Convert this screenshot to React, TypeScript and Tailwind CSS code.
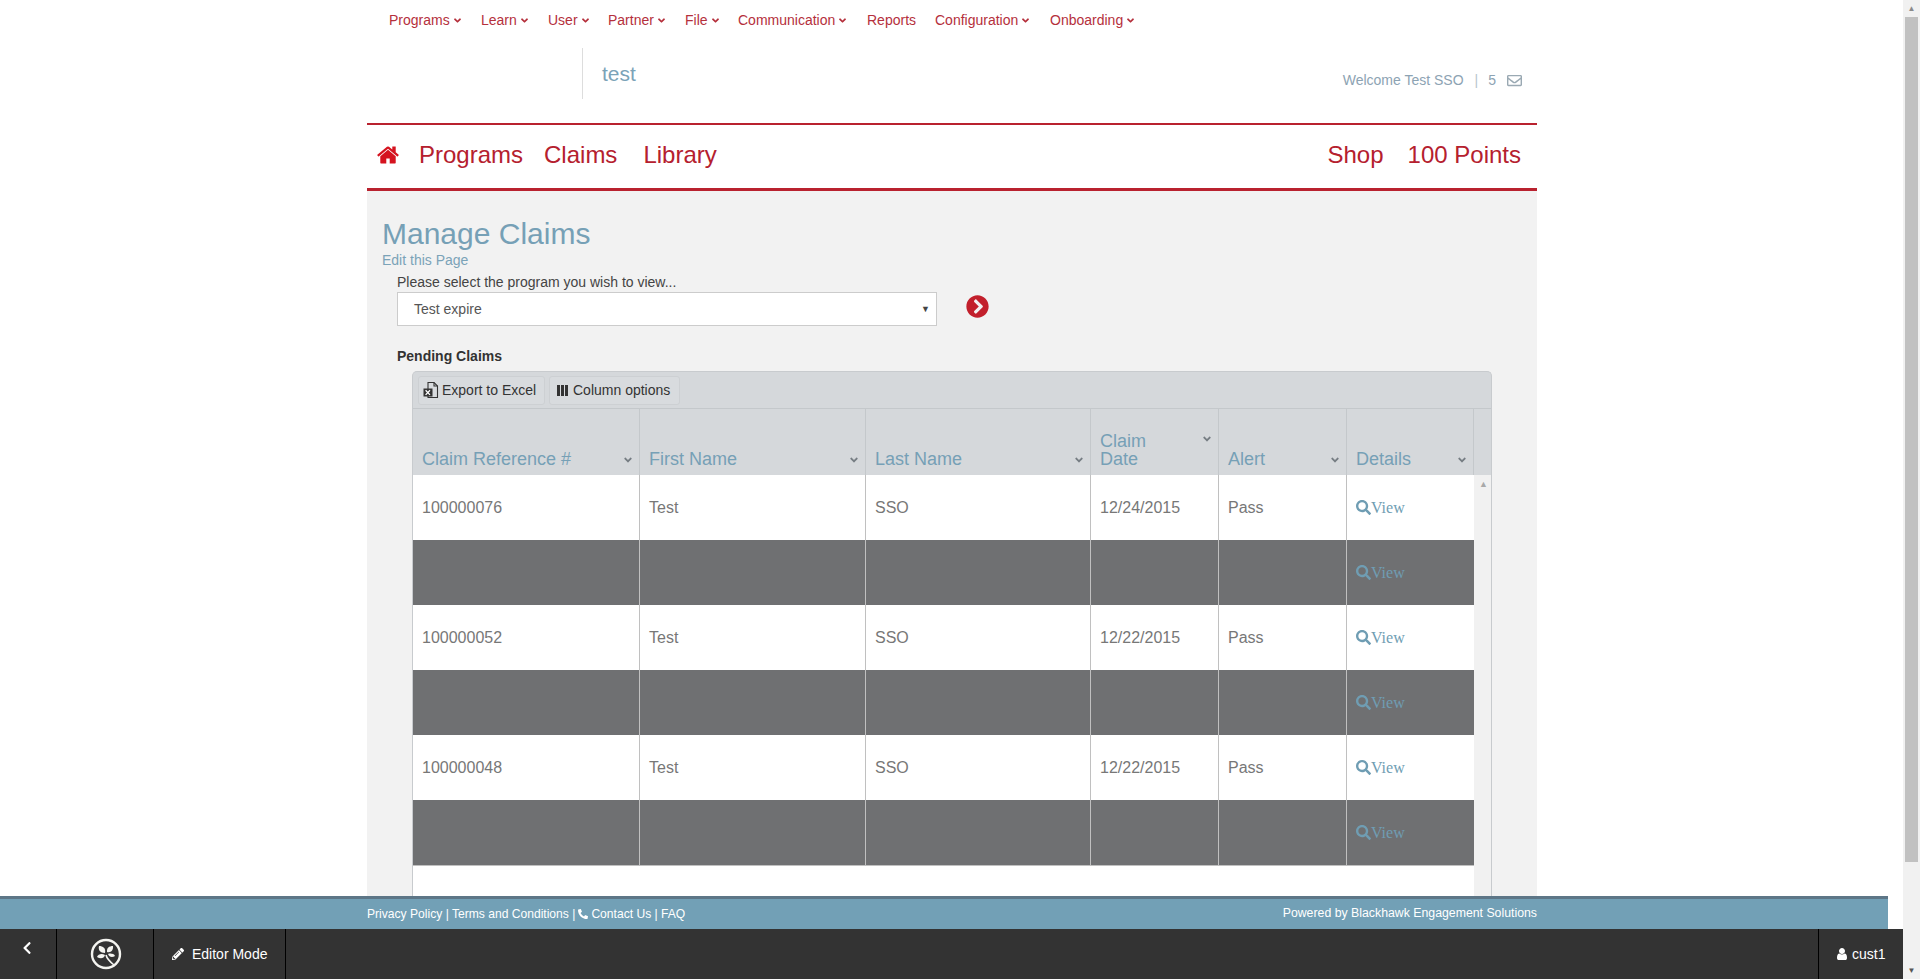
import { FC, ReactNode } from "react";
import {
  FaAngleDown,
  FaChevronCircleRight,
  FaChevronLeft,
  FaPencilAlt,
  FaPhoneAlt,
  FaRegEnvelope,
  FaSearch,
} from "react-icons/fa";

const topMenu = [
  { label: "Programs", arrow: true, width: "w-[92px]" },
  { label: "Learn", arrow: true, width: "w-[67px]" },
  { label: "User", arrow: true, width: "w-[60px]" },
  { label: "Partner", arrow: true, width: "w-[77px]" },
  { label: "File", arrow: true, width: "w-[53px]" },
  { label: "Communication", arrow: true, width: "w-[129px]" },
  { label: "Reports", arrow: false, width: "w-[68px]" },
  { label: "Configuration", arrow: true, width: "w-[115px]" },
  { label: "Onboarding", arrow: true, width: "w-[100px]" },
];

const claims = [
  { ref: "100000076", date: "12/24/2015" },
  { ref: "100000052", date: "12/22/2015" },
  { ref: "100000048", date: "12/22/2015" },
];

const gridCols = "grid grid-cols-[227px_226px_225px_128px_128px_127px_17px]";

const HeadCell: FC<{ children: ReactNode; topArrow?: boolean }> = (props) => (
  <div className="relative flex items-end border-r border-[#c4c8cb] pl-[9px] pb-[7px] text-[18px] leading-[18px] text-[#76a0b6]">
    <span>{props.children}</span>
    <FaAngleDown
      className={
        props.topArrow
          ? "absolute right-[5px] top-[24px] text-[12px] text-[#767d83]"
          : "absolute right-[5px] bottom-[9px] text-[12px] text-[#767d83]"
      }
    />
  </div>
);

const ViewLink = () => (
  <span className="flex items-center font-['Liberation_Serif',serif] text-[16px] text-[#6f9db3]">
    <FaSearch className="text-[15px]" />
    View
  </span>
);

const ClaimRow: FC<{ claim: { ref: string; date: string } }> = ({ claim }) => {
  const cell = "flex items-center border-r border-[#c0c0c0] pl-[9px]";
  return (
    <>
      <div className={`${gridCols} h-[65px] bg-white text-[16px] text-[#777777]`}>
        <div className={cell}>{claim.ref}</div>
        <div className={cell}>Test</div>
        <div className={cell}>SSO</div>
        <div className={cell}>{claim.date}</div>
        <div className={cell}>Pass</div>
        <div className="flex items-center pl-[9px]">
          <ViewLink />
        </div>
        <div className="bg-[#f1f1f1]" />
      </div>
      <div className={`${gridCols} h-[65px] text-[16px]`}>
        <div className={`${cell} bg-[#6f7072]`} />
        <div className={`${cell} bg-[#6f7072]`} />
        <div className={`${cell} bg-[#6f7072]`} />
        <div className={`${cell} bg-[#6f7072]`} />
        <div className={`${cell} bg-[#6f7072]`} />
        <div className="flex items-center bg-[#6f7072] pl-[9px]">
          <ViewLink />
        </div>
        <div className="bg-[#f1f1f1]" />
      </div>
    </>
  );
};

const ExcelIcon = () => (
  <svg viewBox="0 0 16 18" className="h-[18px] w-[16px]" fill="none">
    <path d="M5 1.5h6l3.5 3.5v11.5H5z" stroke="#333" strokeWidth="1.1" />
    <path d="M11 1.5V5h3.5" stroke="#333" strokeWidth="1.1" />
    <rect x="0.5" y="7.5" width="9" height="8" fill="#333" />
    <path d="M2.6 9.3l4.4 4.6M7 9.3l-4.4 4.6" stroke="#fff" strokeWidth="1.3" />
  </svg>
);

const ColumnsIcon = () => (
  <svg viewBox="0 0 11 11" className="h-[11px] w-[11px]" fill="#333">
    <rect x="0" y="0" width="3" height="11" />
    <rect x="4" y="0" width="3" height="11" />
    <rect x="8" y="0" width="3" height="11" />
  </svg>
);

const HomeIcon = () => (
  <svg viewBox="0 0 1792 1792" className="ml-[9px] h-[24px] w-[24px]" fill="#d5131f">
    <path d="M1472 992v480q0 26-19 45t-45 19h-384v-384h-256v384h-384q-26 0-45-19t-19-45v-480q0-1 .5-3t.5-3l575-474 575 474q1 2 1 6zm223-69l-62 74q-8 9-21 11h-3q-13 0-21-7l-692-577-692 577q-12 8-24 7-13-2-21-11l-62-74q-8-10-7-23.5t11-21.5l719-599q32-26 76-26t76 26l244 204v-195q0-14 9-23t23-9h192q14 0 23 9t9 23v408l219 182q10 8 11 21.5t-7 23.5z" />
  </svg>
);

const UserIcon = () => (
  <svg viewBox="0 0 1792 1792" className="h-[14px] w-[14px]" fill="#fff">
    <path d="M1536 1399q0 109-62.5 187t-150.5 78h-854q-88 0-150.5-78t-62.5-187q0-85 8.5-160.5t31.5-152 58.5-131 94-89 134.5-34.5q131 128 313 128t313-128q76 0 134.5 34.5t94 89 58.5 131 31.5 152 8.5 160.5zm-256-887q0 159-112.5 271.5t-271.5 112.5-271.5-112.5-112.5-271.5 112.5-271.5 271.5-112.5 271.5 112.5 112.5 271.5z" />
  </svg>
);

const LeafLogo = () => (
  <svg viewBox="0 0 32 32" className="h-[32px] w-[32px]" fill="none">
    <circle cx="16" cy="16" r="14" stroke="#f4f4f0" strokeWidth="2.4" />
    <path d="M15 15C10 15 8 12 9 8c4 0 7 2 6 7z" fill="#f4f4f0" />
    <path d="M17 14c-.5-4 2-6 6-6 .5 4-2 7-6 6z" fill="#f4f4f0" />
    <path d="M15 17c-3-2-7-1-8 2 3 2 7 2 8-2z" fill="#f4f4f0" />
    <path d="M18 16c2-1 6-.5 7 2-3 2-6 1-7-2z" fill="#f4f4f0" />
    <path d="M16 17c1 4 3 6 8 10" stroke="#f4f4f0" strokeWidth="1.6" />
  </svg>
);

export default function App() {
  return (
    <div className="flex h-[979px] overflow-hidden bg-white font-['Liberation_Sans',Arial,sans-serif]">
      <div className="flex h-full w-[1903px] flex-col">
        <main className="min-h-0 flex-1 overflow-hidden pl-[367px]">
          <div className="w-[1170px]">
            <div className="flex h-[40px] items-center pl-[22px] text-[14px] text-[#b5303c]">
              {topMenu.map((item) => (
                <span key={item.label} className={`flex items-center ${item.width}`}>
                  {item.label}
                  {item.arrow && <FaAngleDown className="ml-[2px] text-[11px]" />}
                </span>
              ))}
            </div>

            <div className="flex h-[83px] items-start">
              <div className="ml-[215px] mt-[8px] flex h-[51px] items-center border-l border-[#dddddd] pl-[19px] text-[21px] text-[#7ba3b8]">
                test
              </div>
              <div className="ml-auto mr-[15px] mt-[30px] flex items-center text-[14px] text-[#8da3b3]">
                <span>Welcome Test SSO</span>
                <span className="ml-[11px] text-[#b8c4cc]">|</span>
                <span className="ml-[10px]">5</span>
                <FaRegEnvelope className="ml-[11px] text-[15px] text-[#9aa9b3]" />
              </div>
            </div>

            <nav className="flex h-[68px] items-center border-y-[2px] border-b-[3px] border-[#b9222f] pb-[4px] text-[24px] text-[#b5202e]">
              <HomeIcon />
              <span className="ml-[19px]">Programs</span>
              <span className="ml-[21px]">Claims</span>
              <span className="ml-[26px]">Library</span>
              <span className="ml-auto">Shop</span>
              <span className="ml-[24px] mr-[16px]">100 Points</span>
            </nav>

            <section className="h-[800px] bg-[#f2f2f2] pl-[15px]">
              <h1 className="pt-[25px] text-[30px] leading-[36px] text-[#76a0b6]">Manage Claims</h1>
              <div className="text-[14px] leading-[16px] text-[#7ba3b8]">Edit this Page</div>

              <div className="pl-[15px]">
                <div className="mt-[6px] text-[14px] leading-[16px] text-[#444444]">
                  Please select the program you wish to view...
                </div>
                <div className="mt-[2px] flex items-center">
                  <div className="relative flex h-[34px] w-[540px] items-center border border-[#cccccc] bg-white pl-[16px] text-[14px] text-[#555555]">
                    Test expire
                    <span className="absolute right-[6px] top-[10px] text-[9px] text-[#444444]">▼</span>
                  </div>
                  <FaChevronCircleRight className="-mt-[6px] ml-[29px] text-[23px] text-[#c2202c]" />
                </div>

                <div className="mt-[22px] text-[14px] font-bold leading-[16px] text-[#333333]">Pending Claims</div>

                <div className="ml-[15px] mt-[7px] w-[1080px] rounded-t-[5px] border-x border-t border-[#c8cbce] bg-[#d5d8db]">
                  <div className="flex h-[37px] items-center gap-[4px] border-b border-[#c4c8cb] pl-[5px] text-[14px] text-[#333333]">
                    <button className="flex h-[29px] w-[127px] items-center gap-[3px] rounded-[3px] border border-[#cdd0d3] bg-[#d8dbde] pl-[4px]">
                      <ExcelIcon />
                      Export to Excel
                    </button>
                    <button className="flex h-[29px] w-[131px] items-center gap-[5px] rounded-[3px] border border-[#cdd0d3] bg-[#d8dbde] pl-[7px]">
                      <ColumnsIcon />
                      Column options
                    </button>
                  </div>
                  <div className={`${gridCols} h-[66px]`}>
                    <HeadCell>Claim Reference #</HeadCell>
                    <HeadCell>First Name</HeadCell>
                    <HeadCell>Last Name</HeadCell>
                    <HeadCell topArrow>
                      Claim
                      <br />
                      Date
                    </HeadCell>
                    <HeadCell>Alert</HeadCell>
                    <HeadCell>Details</HeadCell>
                    <div />
                  </div>
                  <div className="relative">
                    <span className="absolute right-[3px] top-[3px] text-[9px] text-[#a9a9a9]">▲</span>
                    {claims.map((claim) => (
                      <ClaimRow key={claim.ref} claim={claim} />
                    ))}
                    <div className={`${gridCols} h-[60px]`}>
                      <div className="col-span-6 border-t border-[#c0c0c0] bg-white" />
                      <div className="bg-[#f1f1f1]" />
                    </div>
                  </div>
                </div>
              </div>
            </section>
          </div>
        </main>

        <footer className="w-[1888px] border-t-[3px] border-[#5d7687] bg-[#72a0b6]">
          <div className="flex h-[30px] w-[1537px] items-center justify-between pl-[367px] text-[12.3px] text-white">
            <span className="flex items-center text-[12.1px]">
              Privacy Policy | Terms and Conditions |
              <FaPhoneAlt className="mx-[3px] text-[10px]" />
              Contact Us | FAQ
            </span>
            <span className="-mt-[2px]">Powered by Blackhawk Engagement Solutions</span>
          </div>
        </footer>

        <div className="flex h-[50px] items-stretch bg-[#333333] text-[14px] text-white">
          <div className="flex w-[57px] justify-center border-r border-black pr-[2px] pt-[12px]">
            <FaChevronLeft className="text-[14px]" />
          </div>
          <div className="flex w-[97px] items-center justify-center border-r border-black pl-[1px]">
            <LeafLogo />
          </div>
          <div className="flex w-[132px] items-center gap-[8px] border-r border-black pl-[18px]">
            <FaPencilAlt className="text-[12px]" />
            Editor Mode
          </div>
          <div className="ml-auto flex w-[85px] items-center gap-[3px] border-l border-black pl-[16px]">
            <UserIcon />
            cust1
          </div>
        </div>
      </div>

      <aside className="flex w-[17px] flex-col items-center bg-[#f1f1f1]">
        <span className="h-[17px] text-[8px] leading-[17px] text-[#8a8a8a]">▲</span>
        <div className="h-[845px] w-[13px] bg-[#c1c1c1]" />
        <div className="flex-1" />
        <span className="h-[17px] text-[8px] leading-[17px] text-[#555555]">▼</span>
      </aside>
    </div>
  );
}
